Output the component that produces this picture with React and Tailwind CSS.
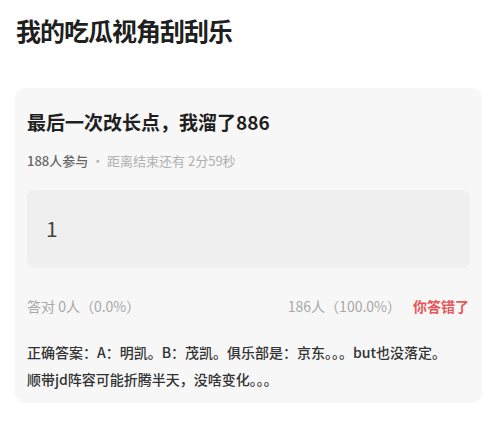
export default function App() {
  const font = { fontFamily: '"Noto Sans CJK SC", "Noto Sans", sans-serif' };
  return (
    <div className="w-[500px] h-[440px] bg-white overflow-hidden" style={font}>
      <div className="pl-[15px] pr-[18px] pt-[11px]">
        <h1 className="text-[25px] leading-[38px] font-bold text-[#1f1f1f] tracking-[-1px] pl-[1px]">
          我的吃瓜视角刮刮乐
        </h1>
        <div className="mt-[39px] bg-[#f7f7f7] rounded-[10px] px-[12px] pt-[20px] pb-[10px]">
          <div className="text-[19px] leading-[28px] font-bold text-[#1f1f1f]">
            最后一次改长点，我溜了886
          </div>
          <div className="mt-[15px] text-[13px] leading-[20px] text-[#b0b0b0]">
            <span className="text-[#666] font-medium">188人参与</span>
            <span> · 距离结束还有 2分59秒</span>
          </div>
          <div className="mt-[19px] h-[78px] bg-[#efefef] rounded-[8px] flex items-center pl-[19px]">
            <span className="text-[21px] text-[#444]">1</span>
          </div>
          <div className="mt-[28px] flex items-center justify-between text-[14px] leading-[20px] text-[#a8a8a8]">
            <span>答对 0人（0.0%）</span>
            <span className="flex items-center gap-[12px] pr-[1px]">
              <span>186人（100.0%）</span>
              <span className="text-[#e8585a] font-bold">你答错了</span>
            </span>
          </div>
          <div className="mt-[23px] text-[14px] leading-[27px] font-medium text-[#333] whitespace-nowrap">
            正确答案：A：明凯。B：茂凯。俱乐部是：京东。。。but也没落定。
            <br />
            顺带jd阵容可能折腾半天，没啥变化。。。
          </div>
        </div>
      </div>
    </div>
  );
}
